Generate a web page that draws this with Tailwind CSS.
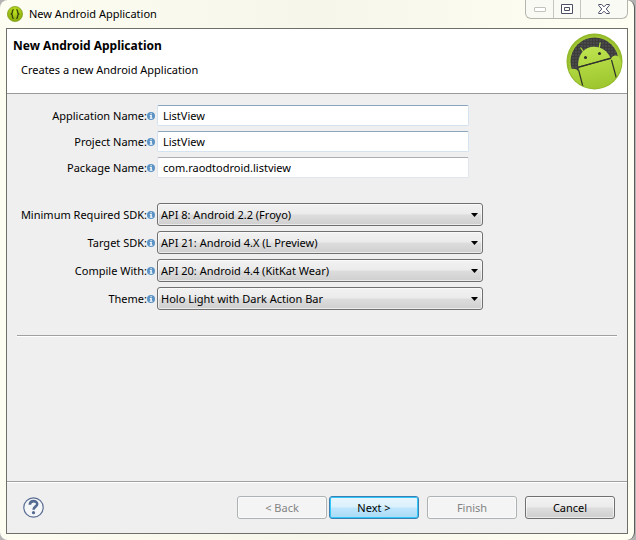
<!DOCTYPE html>
<html lang="en">
<head>
<meta charset="utf-8">
<title>New Android Application</title>
<script src="https://cdn.jsdelivr.net/npm/@tailwindcss/browser@4"></script>
</head>
<body class="bg-[#b4b4b4] font-['Noto_Sans','Open_Sans',sans-serif] text-[11px] leading-4 text-black">
<svg class="hidden" aria-hidden="true">
  <defs>
    <symbol id="info" viewBox="0 0 8 8">
      <circle cx="4" cy="4" r="4" fill="#5c93c4"/>
      <path d="M3.4 1.2h1.4v1H3.4zM2.8 3h2v2.8h.7v.9H2.7v-.9h.7V3.9h-.6z" fill="#fff"/>
    </symbol>
  </defs>
</svg>
<div class="mr-px flex min-h-screen flex-col rounded-lg border-r border-[#5c5c5c] bg-linear-to-r from-[#fdfdf2] via-[#f6f6ea] to-[#fffff4] pr-1.5 pb-1.5 pl-1.5">
  <header class="flex h-7 items-start">
    <svg class="mt-1.5 ml-px h-4 w-4" viewBox="0 0 16 16" aria-hidden="true">
      <defs><radialGradient id="appFill" cx=".5" cy=".3" r=".7"><stop offset="0" stop-color="#c0e222"/><stop offset="1" stop-color="#86a80c"/></radialGradient></defs>
      <circle cx="8" cy="8" r="7.6" fill="url(#appFill)" stroke="#7f9c18" stroke-width=".7"/>
      <path d="M6.8 3.6C5 3.6 5.5 5.2 5.3 6.5 5.2 7.5 4.6 7.9 3.8 8c.8.1 1.4.5 1.5 1.5.2 1.3-.3 2.9 1.5 2.9M9.2 3.6c1.8 0 1.3 1.6 1.5 2.9.1 1 .7 1.4 1.5 1.5-.8.1-1.4.5-1.5 1.5-.2 1.3.3 2.9-1.5 2.9" fill="none" stroke="#364508" stroke-width="1.4"/>
    </svg>
    <span class="mt-1.5 ml-1.5 flex-1">New Android Application</span>
    <div class="flex h-[19px] rounded-b-md border border-t-0 border-[#b5b5ad] bg-[#fafaf4]">
      <button aria-label="Minimize" class="flex w-7 items-center justify-center border-r border-[#c5c5bd]">
        <svg class="h-[5px] w-3" viewBox="0 0 12 5"><rect x=".5" y=".5" width="11" height="4" rx=".5" fill="#fff" stroke="#c3c3bb"/></svg>
      </button>
      <button aria-label="Maximize" class="flex w-[27px] items-center justify-center border-r border-[#c5c5bd]">
        <svg class="h-[10px] w-3" viewBox="0 0 12 10"><path fill-rule="evenodd" d="M.5.5h11v9H.5zM3.5 3.5v3h5v-3z" fill="#fff" stroke="#4c5067"/></svg>
      </button>
      <button aria-label="Close" class="flex w-[46px] items-center justify-center">
        <svg class="h-[10px] w-3" viewBox="0 0 12 10"><path d="M.7.5h3L6 2.8 8.3.5h3v1L8.2 5l3.1 3.5v1h-3L6 7.2 3.7 9.5h-3v-1L3.8 5 .7 1.5z" fill="#fff" stroke="#4c5067"/></svg>
      </button>
    </div>
  </header>

  <main class="flex flex-1 flex-col border border-[#6e6e6a] bg-[#efefef]">
    <section class="flex h-[65px] items-start border-b border-[#9a9a9a] bg-white pr-1 pl-1.5">
      <div class="flex-1 pt-[9px]">
        <h1 class="text-xs font-bold">New Android Application</h1>
        <p class="mt-2 ml-2">Creates a new Android Application</p>
      </div>
      <svg class="mt-1 h-[57px] w-[57px]" viewBox="0 0 57 57" role="img" aria-label="Android">
        <defs>
          <pattern id="mesh" width="3" height="3" patternUnits="userSpaceOnUse"><rect width="3" height="3" fill="#3c3c3c"/><rect width="2" height="2" fill="#4a4a4a"/></pattern>
          <radialGradient id="rim" cx=".5" cy=".5" r=".5"><stop offset=".84" stop-color="#a9cf38"/><stop offset="1" stop-color="#8db426"/></radialGradient>
          <linearGradient id="robot" gradientUnits="userSpaceOnUse" x1="24" y1="12" x2="32" y2="57"><stop offset="0" stop-color="#bfe650"/><stop offset="1" stop-color="#9cc42c"/></linearGradient>
          <clipPath id="disc"><circle cx="28.5" cy="28.5" r="27"/></clipPath>
        </defs>
        <circle cx="28.5" cy="28.5" r="28" fill="url(#rim)"/>
        <circle cx="28.5" cy="28.5" r="24" fill="url(#mesh)"/>
        <g clip-path="url(#disc)">
          <path d="M18 19.5 14.5 14.5M33 16l1.2-6.5" stroke="#aed636" stroke-width="1.3"/>
          <path d="M12.2 33.5C11.5 23 17 15.500 25 14S41 16.500 44.500 25z" fill="url(#robot)"/>
          <path d="M2 38c3-3 8-3 10 0l1-3.500L45 26c2-5 8-4 9 0l4 8v24H2z" fill="url(#robot)"/>
          <path d="M12.200 34.300 44.700 25.200M12.500 36.500 17 54M45.500 27l5 18.500" stroke="#30332a" stroke-width="1.200" fill="none"/>
          <circle cx="19.5" cy="24.500" r="1.500" fill="#30332a"/><circle cx="33.500" cy="20.500" r="1.500" fill="#30332a"/>
        </g>
      </svg>
    </section>

    <form class="flex-1 px-2.5">
      <div class="grid grid-cols-[138px_minmax(0,1fr)] gap-x-0.5 gap-y-[5px] pt-[11px]">
        <div class="flex items-center justify-end"><label for="app">Application Name:</label><svg class="h-2 w-2"><use href="#info"/></svg></div>
        <input id="app" value="ListView" class="h-[21px] w-full max-w-[312px] rounded-xs border border-[#d5e3f0] border-t-[#8aa5be] bg-white px-[5px]">
        <div class="flex items-center justify-end"><label for="project">Project Name:</label><svg class="h-2 w-2"><use href="#info"/></svg></div>
        <input id="project" value="ListView" class="h-[21px] w-full max-w-[312px] rounded-xs border border-[#d5e3f0] border-t-[#8aa5be] bg-white px-[5px]">
        <div class="flex items-center justify-end"><label for="package">Package Name:</label><svg class="h-2 w-2"><use href="#info"/></svg></div>
        <input id="package" value="com.raodtodroid.listview" class="h-[21px] w-full max-w-[312px] rounded-xs border border-[#e0e5ee] border-t-[#abadb3] bg-white px-[5px]">
      </div>

      <div class="mt-[25px] grid grid-cols-[138px_minmax(0,1fr)] gap-x-0.5 gap-y-[5px]">
        <div class="flex items-center justify-end"><label for="min">Minimum Required SDK:</label><svg class="h-2 w-2"><use href="#info"/></svg></div>
        <div class="relative w-full max-w-[326px]">
          <select id="min" class="block h-[23px] w-full appearance-none rounded-[3px] border border-[#707070] bg-[linear-gradient(#f2f2f2,#ebebeb_48%,#dddddd_52%,#cfcfcf)] pr-5 pl-[3px] inset-ring inset-ring-white/60"><option>API 8: Android 2.2 (Froyo)</option></select>
          <svg class="pointer-events-none absolute top-2.5 right-[5px] h-1 w-[7px]" viewBox="0 0 7 4"><path d="M0 0h7L3.5 4z"/></svg>
        </div>
        <div class="flex items-center justify-end"><label for="target">Target SDK:</label><svg class="h-2 w-2"><use href="#info"/></svg></div>
        <div class="relative w-full max-w-[326px]">
          <select id="target" class="block h-[23px] w-full appearance-none rounded-[3px] border border-[#707070] bg-[linear-gradient(#f2f2f2,#ebebeb_48%,#dddddd_52%,#cfcfcf)] pr-5 pl-[3px] inset-ring inset-ring-white/60"><option>API 21: Android 4.X (L Preview)</option></select>
          <svg class="pointer-events-none absolute top-2.5 right-[5px] h-1 w-[7px]" viewBox="0 0 7 4"><path d="M0 0h7L3.5 4z"/></svg>
        </div>
        <div class="flex items-center justify-end"><label for="compile">Compile With:</label><svg class="h-2 w-2"><use href="#info"/></svg></div>
        <div class="relative w-full max-w-[326px]">
          <select id="compile" class="block h-[23px] w-full appearance-none rounded-[3px] border border-[#707070] bg-[linear-gradient(#f2f2f2,#ebebeb_48%,#dddddd_52%,#cfcfcf)] pr-5 pl-[3px] inset-ring inset-ring-white/60"><option>API 20: Android 4.4 (KitKat Wear)</option></select>
          <svg class="pointer-events-none absolute top-2.5 right-[5px] h-1 w-[7px]" viewBox="0 0 7 4"><path d="M0 0h7L3.5 4z"/></svg>
        </div>
        <div class="flex items-center justify-end"><label for="theme">Theme:</label><svg class="h-2 w-2"><use href="#info"/></svg></div>
        <div class="relative w-full max-w-[326px]">
          <select id="theme" class="block h-[23px] w-full appearance-none rounded-[3px] border border-[#707070] bg-[linear-gradient(#f2f2f2,#ebebeb_48%,#dddddd_52%,#cfcfcf)] pr-5 pl-[3px] inset-ring inset-ring-white/60"><option>Holo Light with Dark Action Bar</option></select>
          <svg class="pointer-events-none absolute top-2.5 right-[5px] h-1 w-[7px]" viewBox="0 0 7 4"><path d="M0 0h7L3.5 4z"/></svg>
        </div>
      </div>
      <hr class="mt-[25px] border-[#a0a0a0] shadow-[0_1px_0_#fff]">
    </form>

    <footer class="flex h-[52px] items-center border-t border-[#a0a0a0] pr-3 pl-4 inset-shadow-[0_1px_0_#fff]">
      <button aria-label="Help">
        <svg class="h-[21px] w-[21px]" viewBox="0 0 21 21"><circle cx="10.5" cy="10.5" r="9.7" fill="#f5f6f8" stroke="#5b6f94" stroke-width="1.2"/><path d="M6.8 7.8C7 2.8 14.5 3.2 14.2 7.2c-.2 2.5-3.6 2.5-3.6 5.5" fill="none" stroke="#566b91" stroke-width="2.6"/><circle cx="10.5" cy="15.7" r="1.6" fill="#566b91"/></svg>
      </button>
      <div class="ml-auto flex gap-2">
        <div class="flex gap-0.5">
          <button disabled class="h-[23px] w-[90px] rounded-[3px] border border-[#adb2b5] bg-[#f4f4f4] text-[#838383] inset-ring inset-ring-[#fafafa]">&lt; Back</button>
          <button class="h-[23px] w-[90px] rounded-[3px] border border-[#3c7fb1] bg-[linear-gradient(#eaf6fd,#d9f0fc_48%,#bee6fd_52%,#a9dbf5)] inset-ring inset-ring-[#30c8fa]">Next &gt;</button>
        </div>
        <button disabled class="h-[23px] w-[90px] rounded-[3px] border border-[#adb2b5] bg-[#f4f4f4] text-[#838383] inset-ring inset-ring-[#fafafa]">Finish</button>
        <button class="h-[23px] w-[90px] rounded-[3px] border border-[#707070] bg-[linear-gradient(#f2f2f2,#ebebeb_48%,#dddddd_52%,#cfcfcf)] inset-ring inset-ring-white/60">Cancel</button>
      </div>
    </footer>
  </main>
</div>
</body>
</html>
